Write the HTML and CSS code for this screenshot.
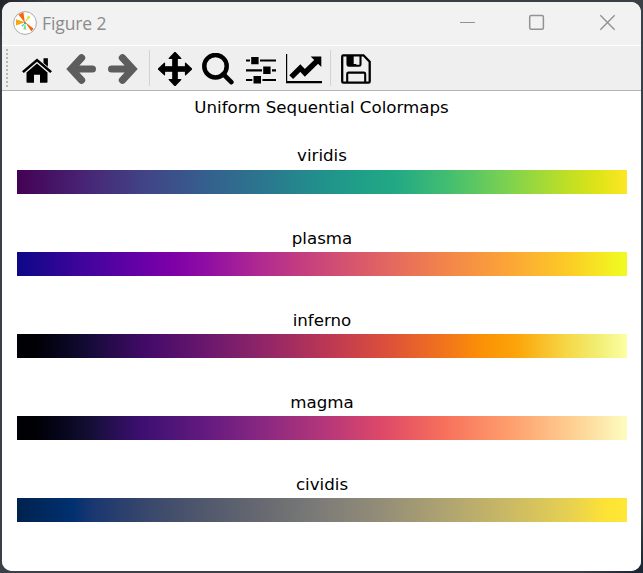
FILE: index.html
```html
<!DOCTYPE html>
<html lang="en">
<head>
<meta charset="utf-8">
<title>Figure 2</title>
<link rel="stylesheet" href="styles.css">
</head>
<body>
<div class="window">
  <header class="titlebar">
    <svg class="logo" width="24" height="24" viewBox="0 0 24 24">
      <circle cx="12" cy="12" r="11.4" fill="#fff" stroke="#aaa"/>
      <path d="M12 12L5.4 3.6 10.4 1.2z" fill="#f5670d"/>
      <path d="M12 12L15 4.2 17.6 6z" fill="#d5e93c"/>
      <path d="M12 11.3L3 8.2v6.2z" fill="#f2a911"/>
      <path d="M12 11L20.7 17.8 18.3 20.2z" fill="#f5670d"/>
      <path d="M12 12l1.3 6.5h-3z" fill="#6fe77b"/>
      <path d="M12 12l-3.5 2.5 1.2 1.3z" fill="#46b9dc"/>
      <circle cx="12" cy="12" r="1" fill="#398b9d"/>
    </svg>
    <h1 class="caption">Figure 2</h1>
    <svg class="controls" width="156" height="17" viewBox="0 0 156 17" fill="none" stroke="#929292" stroke-width="1.2">
      <path d="M0 8.5h15"/>
      <rect x="69.7" y="1.6" width="13.7" height="13.7" rx="1.5" stroke-width="1.5"/>
      <path d="M140.3 1.3l14.4 14.4M154.7 1.3L140.3 15.7" stroke-width="1.4"/>
    </svg>
  </header>
  <nav class="toolbar">
    <i class="grip"></i>
    <svg class="icon home" width="32" height="26" viewBox="0 0 32 26">
      <path d="M16 1.4L31 14.2l-1.8 1.8L16 4.8 2.8 16 1 14.2z"/>
      <path d="M22.5 1.2h4.4v8.6l-4.4-3.8zM16 6.4l10.5 9v9.6q0 .8-.8.8H19v-8h-6v8H6.3q-.8 0-.8-.8v-9.6z"/>
    </svg>
    <svg class="icon back" width="30" height="32" viewBox="0 0 30 32">
      <path d="M15.6 4.8L5.2 16l10.4 11.2M6 16h20.4" fill="none" stroke="#5d5d5d" stroke-width="7.2" stroke-linecap="round" stroke-linejoin="miter"/>
    </svg>
    <svg class="icon forward" width="30" height="32" viewBox="0 0 30 32">
      <path d="M14.4 4.8L24.8 16 14.4 27.2M24 16H3.6" fill="none" stroke="#5d5d5d" stroke-width="7.2" stroke-linecap="round" stroke-linejoin="miter"/>
    </svg>
    <i class="separator"></i>
    <svg class="icon pan" width="34" height="34" viewBox="0 0 34 34">
      <path d="M17 .3l5.8 6.2h-3.6v8.3h8.3v-3.6l6.2 5.8-6.2 5.8v-3.6h-8.3v8.3h3.6L17 33.7l-5.8-6.2h3.6v-8.3H6.5v3.6L.3 17l6.2-5.8v3.6h8.3V6.5h-3.6z" stroke="#000" stroke-width="1.2" stroke-linejoin="round"/>
    </svg>
    <svg class="icon zoom" width="32" height="32" viewBox="0 0 32 32">
      <circle cx="13.5" cy="13.2" r="11.2" fill="none" stroke="#000" stroke-width="4.5"/>
      <path d="M21.3 21.2l8 8" stroke="#000" stroke-width="4.7" stroke-linecap="round"/>
    </svg>
    <svg class="icon sliders" width="30" height="28" viewBox="0 0 30 28">
      <path d="M0 4.5h4M14 4.5h16M0 14.3h16M26 14.3h4M0 24h6.3M16.4 24H30" stroke="#000" stroke-width="2.2"/>
      <path d="M5.2.9h7.4v7.4H5.2zM17.2 10.5h7.4v7.4h-7.4zM7.5 20.1H15v7.4H7.5z"/>
    </svg>
    <svg class="icon chart" width="36" height="30" viewBox="0 0 36 30">
      <path d="M.6 0v28.2H36" fill="none" stroke="#000" stroke-width="1.2"/>
      <path d="M0 27h36v2.2H0z"/>
      <path d="M5.2 23.2L14.3 14l4.6 4.8L31 7" fill="none" stroke="#000" stroke-width="5.4"/>
      <path d="M24.7 2.5h10.6v10.6z"/>
    </svg>
    <i class="separator second"></i>
    <svg class="icon save" width="30" height="30" viewBox="0 0 30 30">
      <path d="M2.3 1.3h20.2l6.2 6.5v19.7q0 1.2-1.2 1.2H2.3q-1.1 0-1.1-1.2V2.5q0-1.2 1.1-1.2z" fill="none" stroke="#000" stroke-width="2.3"/>
      <path d="M6.5 1v9.4q0 1.4 1.4 1.4h10.2q1.4 0 1.4-1.4V1M6.2 29V20q0-1.4 1.4-1.4h15.2q1.4 0 1.4 1.4v9" fill="none" stroke="#000" stroke-width="2.1"/>
      <path d="M6 1h6.7v9h2.5V1h3v1h-3v10H6z"/>
    </svg>
  </nav>
  <main class="figure">
    <h2 class="suptitle">Uniform Sequential Colormaps</h2>
    <section class="map"><h3 class="name">viridis</h3><div class="bar viridis"></div></section>
    <section class="map"><h3 class="name">plasma</h3><div class="bar plasma"></div></section>
    <section class="map"><h3 class="name">inferno</h3><div class="bar inferno"></div></section>
    <section class="map"><h3 class="name">magma</h3><div class="bar magma"></div></section>
    <section class="map"><h3 class="name">cividis</h3><div class="bar cividis"></div></section>
  </main>
</div>
</body>
</html>
```
FILE: styles.css
```css
* { box-sizing: border-box; }

body {
  margin: 0;
  height: 573px;
  padding: 2px;
  overflow: hidden;
  background: linear-gradient(135deg, #20242a, #3b4046 4%, #3b4046 95%, #172331);
}

.window {
  height: 569px;
  border-radius: 10px;
  overflow: hidden;
  background: #fff;
}

.titlebar {
  display: flex;
  align-items: center;
  height: 43px;
  padding: 0 25px 2px 11px;
  background: #f2f2f2;
}

.caption {
  margin: 0 0 0 5px;
  font: 400 17.5px/24px "Open Sans", "Noto Sans", sans-serif;
  letter-spacing: -0.1px;
  color: #8b8b8b;
}

.controls { margin-left: auto; }

.toolbar {
  display: flex;
  align-items: center;
  height: 46px;
  border-top: 1px solid #fff;
  border-bottom: 1px solid #b4b4b4;
  background: #efefef;
}

.icon { flex: none; }

.grip {
  width: 2px;
  height: 38px;
  margin-left: 4px;
  background: repeating-linear-gradient(#b5b5b5 0 2px, #efefef 2px 4px);
}

.home { margin: 3px 0 0 13px; }
.back { margin: 1px 0 0 13px; }
.forward { margin: 1px 0 0 12px; }
.pan { margin: 1px 0 0 8px; }
.zoom { margin: 1px 0 0 10px; }
.sliders { margin: 3px 0 0 12px; }
.chart { margin: 2px 0 0 10px; }
.save { margin: 1px 0 0 10px; }

.separator {
  width: 1px;
  height: 36px;
  margin-left: 11px;
  background: #d2d2d2;
}

.second { margin-left: 8px; }

.figure {
  height: 480px;
  padding: 7px 14px 0 15px;
  background: #fff;
  font-family: "DejaVu Sans", sans-serif;
  color: #000;
}

.suptitle,
.name {
  margin: 0;
  font-size: 16.67px;
  font-weight: 400;
  line-height: 20px;
  text-align: center;
}

.suptitle {
  margin-bottom: 28px;
  padding-right: 1px;
}

.map { height: 82px; }

.bar {
  height: 24px;
  margin-top: 4px;
}

.map + .map { padding-top: 1px; }
.map + .map .bar { margin-top: 3px; }

.viridis { background: linear-gradient(90deg, #440154, #482475 11%, #414487 21%, #355f8d 31%, #2a788e 41%, #21918c 50%, #1fa187 57%, #22a884 62%, #44bf70 71%, #7ad151 80%, #bddf26 90%, #dde318 95%, #fde725); }
.plasma { background: linear-gradient(90deg, #0d0887, #41049d 11%, #6a00a8 21%, #7c00a8 25%, #8f0da4 31%, #b12a90 40%, #cc4778 50%, #e16462 60%, #f2844b 70%, #fca636 81%, #fcce25 91%, #f0f921 99%); }
.inferno { background: linear-gradient(90deg, #000004, #000005 3%, #07051b 7%, #160b39 12%, #420a68 21%, #6a176e 31%, #932667 41%, #bc3754 51%, #dd513a 61%, #f37819 71%, #fb9006 76%, #fca50a 82%, #f6d746 90%, #f1ed71 95%, #fcffa4); }
.magma { background: linear-gradient(90deg, #000004, #000005 3%, #06051a 7%, #140e36 12%, #3b0f70 20%, #641a80 31%, #8c2981 41%, #b73779 51%, #de4968 60%, #f7705c 70%, #fe9f6d 81%, #fecf92 91%, #fcfdbf); }
.cividis { background: linear-gradient(90deg, #00224e, #003070 9%, #173670 12%, #35456c 20%, #4f576c 30%, #666970 40%, #7d7c78 50%, #948e77 60%, #aea371 70%, #c8b866 80%, #e5cf52 90%, #fee434 97%, #fee835); }
```
